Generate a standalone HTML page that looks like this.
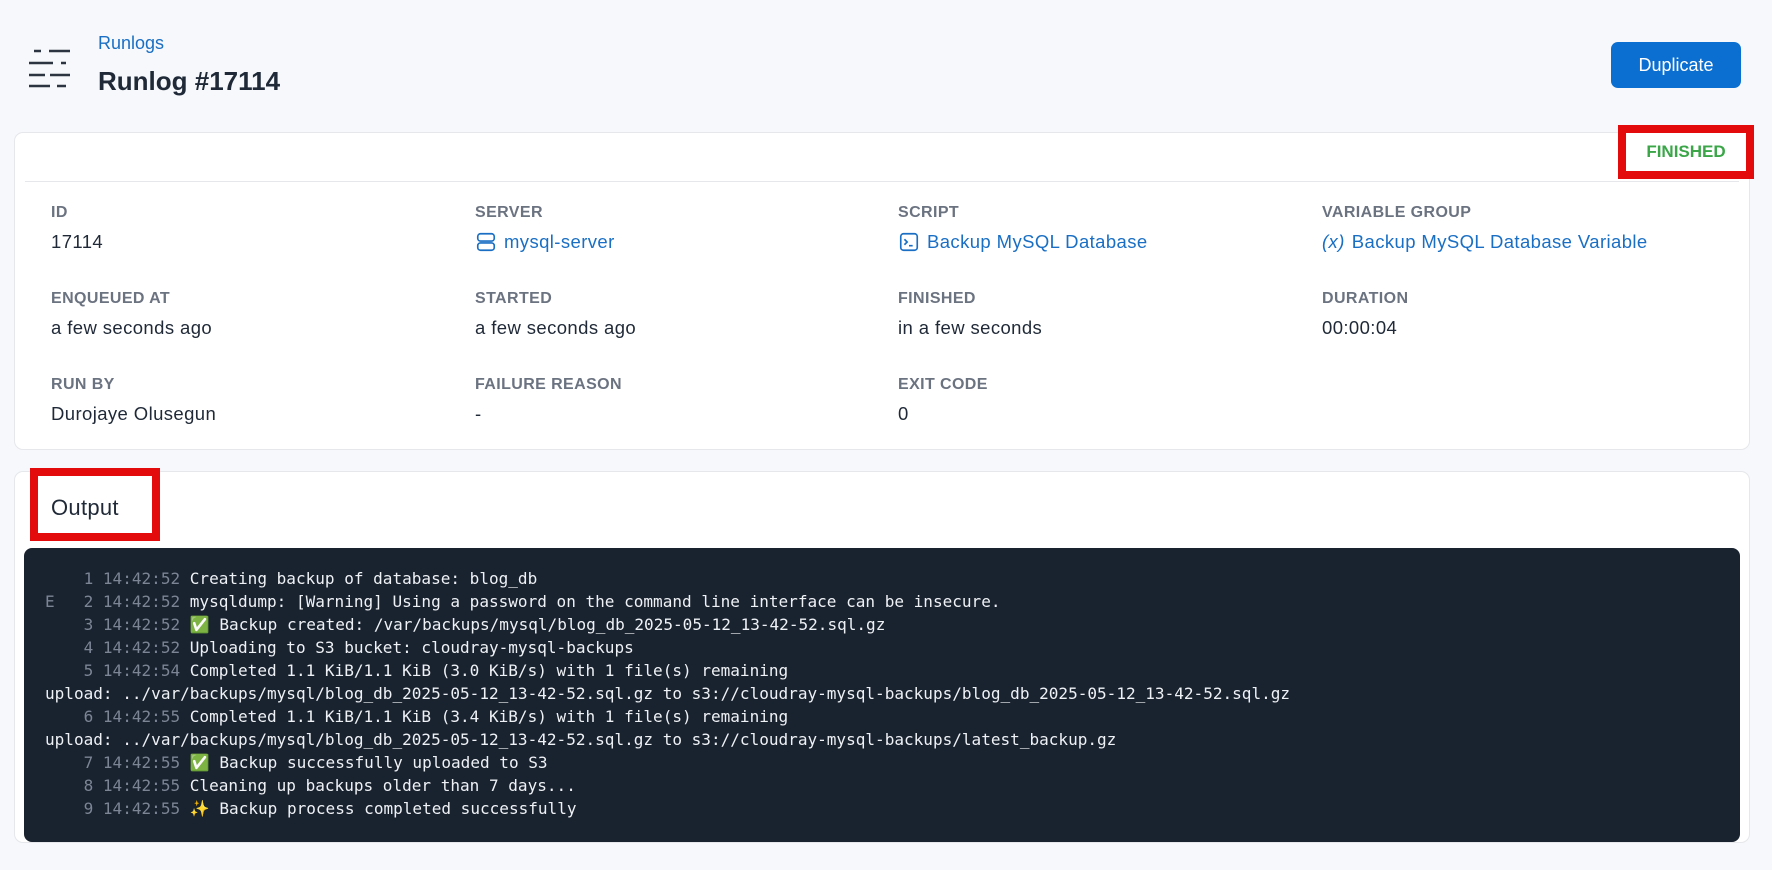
<!DOCTYPE html>
<html><head><meta charset="utf-8"><style>
*{box-sizing:border-box;margin:0;padding:0}
body{width:1772px;height:870px;background:#f6f8fb;font-family:"Liberation Sans",sans-serif;color:#1f2937;position:relative;overflow:hidden}
.a{position:absolute}
.card{position:absolute;background:#fff;border:1px solid #e5e7eb;border-radius:9px}
.lbl{position:absolute;font-size:16px;font-weight:600;color:#6b7280;letter-spacing:.4px}
.val{position:absolute;font-size:18.5px;color:#1f2937;letter-spacing:.4px}
.lnk{color:#1a6fc4;display:flex;align-items:center;gap:7px}
pre{font-family:"DejaVu Sans Mono","Liberation Mono",monospace;font-size:16.05px;line-height:23px;color:#eef1f5}
.g{color:#7b8594}
</style></head><body>
<svg class="a" style="left:26px;top:44px" width="48" height="48" viewBox="26 44 48 48" stroke="#2b3440" stroke-width="2.4" fill="none">
<path d="M34 51h7M49 51h21M29 63h24M61 63h5M29 75h16M50 75h20M29 86h21M57 86h9"/></svg>
<div class="a" style="left:98px;top:33px;font-size:18px;color:#1a6fc4">Runlogs</div>
<div class="a" style="left:98px;top:66px;font-size:26px;font-weight:700;color:#1f2937">Runlog #17114</div>
<div class="a" style="left:1611px;top:42px;width:130px;height:46px;background:#0b6fd1;border-radius:7px;color:#fff;font-size:18px;display:flex;align-items:center;justify-content:center">Duplicate</div>

<div class="card" style="left:14px;top:132px;width:1736px;height:318px"></div>
<div class="a" style="left:25px;top:181px;width:1714px;height:1px;background:#e5e7eb"></div>
<div class="a" style="left:1618px;top:125px;width:136px;height:54px;border:8px solid #e30b0b;background:#fff;color:#3aa648;font-weight:700;font-size:17px;display:flex;align-items:center;justify-content:center">FINISHED</div>

<div class="lbl" style="left:51px;top:204px">ID</div><div class="val" style="left:51px;top:231px">17114</div>
<div class="lbl" style="left:475px;top:204px">SERVER</div>
<div class="val lnk" style="left:475px;top:231px"><svg width="22" height="22" viewBox="0 0 24 24" fill="none" stroke="#1a6fc4" stroke-width="1.8"><rect x="3" y="3" width="18" height="8" rx="3"/><rect x="3" y="13" width="18" height="8" rx="3"/><path d="M7 7h.01M7 17h.01"/></svg>mysql-server</div>
<div class="lbl" style="left:898px;top:204px">SCRIPT</div>
<div class="val lnk" style="left:898px;top:231px"><svg width="22" height="22" viewBox="0 0 24 24" fill="none" stroke="#1a6fc4" stroke-width="1.8"><rect x="3" y="3" width="18" height="18" rx="3"/><path d="M7 9l3 3-3 3M12 16h4"/></svg>Backup MySQL Database</div>
<div class="lbl" style="left:1322px;top:204px">VARIABLE GROUP</div>
<div class="val lnk" style="left:1322px;top:231px"><span style="font-style:italic">(x)</span>Backup MySQL Database Variable</div>

<div class="lbl" style="left:51px;top:290px">ENQUEUED AT</div><div class="val" style="left:51px;top:317px">a few seconds ago</div>
<div class="lbl" style="left:475px;top:290px">STARTED</div><div class="val" style="left:475px;top:317px">a few seconds ago</div>
<div class="lbl" style="left:898px;top:290px">FINISHED</div><div class="val" style="left:898px;top:317px">in a few seconds</div>
<div class="lbl" style="left:1322px;top:290px">DURATION</div><div class="val" style="left:1322px;top:317px">00:00:04</div>

<div class="lbl" style="left:51px;top:376px">RUN BY</div><div class="val" style="left:51px;top:403px">Durojaye Olusegun</div>
<div class="lbl" style="left:475px;top:376px">FAILURE REASON</div><div class="val" style="left:475px;top:403px">-</div>
<div class="lbl" style="left:898px;top:376px">EXIT CODE</div><div class="val" style="left:898px;top:403px">0</div>

<div class="card" style="left:14px;top:471px;width:1736px;height:372px"></div>
<div class="a" style="left:30px;top:468px;width:130px;height:73px;border:8px solid #e30b0b;background:#fff"></div>
<div class="a" style="left:51px;top:495px;font-size:22px;color:#1f2937;letter-spacing:.3px">Output</div>
<div class="a" style="left:24px;top:548px;width:1716px;height:294px;background:#19222f;border-radius:8px"></div>
<pre class="a" style="left:45px;top:567px"><span class="g">    1 14:42:52</span> Creating backup of database: blog_db
<span class="g">E   2 14:42:52</span> mysqldump: [Warning] Using a password on the command line interface can be insecure.
<span class="g">    3 14:42:52</span> ✅ Backup created: /var/backups/mysql/blog_db_2025-05-12_13-42-52.sql.gz
<span class="g">    4 14:42:52</span> Uploading to S3 bucket: cloudray-mysql-backups
<span class="g">    5 14:42:54</span> Completed 1.1 KiB/1.1 KiB (3.0 KiB/s) with 1 file(s) remaining
upload: ../var/backups/mysql/blog_db_2025-05-12_13-42-52.sql.gz to s3://cloudray-mysql-backups/blog_db_2025-05-12_13-42-52.sql.gz
<span class="g">    6 14:42:55</span> Completed 1.1 KiB/1.1 KiB (3.4 KiB/s) with 1 file(s) remaining
upload: ../var/backups/mysql/blog_db_2025-05-12_13-42-52.sql.gz to s3://cloudray-mysql-backups/latest_backup.gz
<span class="g">    7 14:42:55</span> ✅ Backup successfully uploaded to S3
<span class="g">    8 14:42:55</span> Cleaning up backups older than 7 days...
<span class="g">    9 14:42:55</span> ✨ Backup process completed successfully</pre>
</body></html>
